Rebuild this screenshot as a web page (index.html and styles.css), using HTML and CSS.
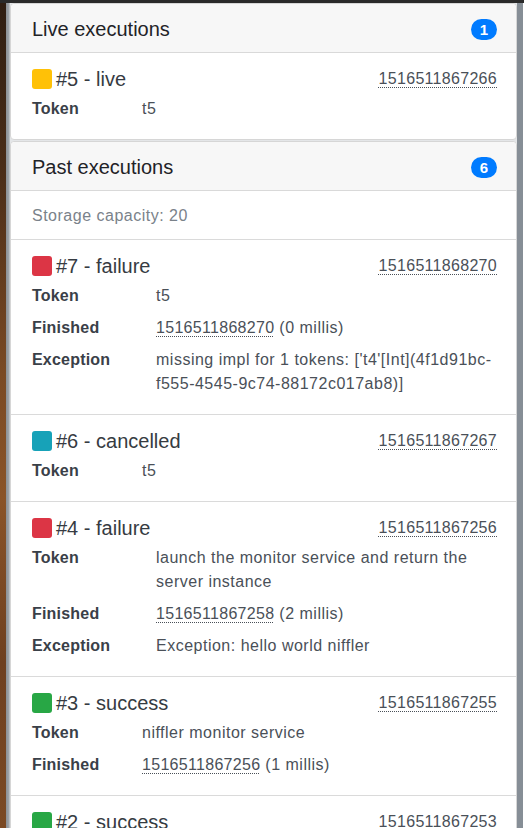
FILE: index.html
```html
<!DOCTYPE html>
<html lang="en">
<head>
<meta charset="utf-8">
<title>Executions</title>
<link rel="stylesheet" href="styles.css">
</head>
<body>
<div class="screen">
  <div class="topbar"></div>
  <div class="frame">
    <div class="wood"></div>
    <div class="edge-left"></div>
    <main class="panel">
      <section class="card">
        <header class="card-header">
          <h5 class="card-title">Live executions</h5>
          <span class="badge">1</span>
        </header>
        <ul class="list">
          <li class="item">
            <div class="item-head">
              <h5 class="item-title"><span class="status live"></span>#5 - live</h5>
              <abbr class="ts">1516511867266</abbr>
            </div>
            <dl class="props narrow">
              <dt>Token</dt><dd>t5</dd>
            </dl>
          </li>
        </ul>
      </section>

      <section class="card">
        <header class="card-header">
          <h5 class="card-title">Past executions</h5>
          <span class="badge">6</span>
        </header>
        <ul class="list">
          <li class="item muted-item">Storage capacity: 20</li>
          <li class="item">
            <div class="item-head">
              <h5 class="item-title"><span class="status failure"></span>#7 - failure</h5>
              <abbr class="ts">1516511868270</abbr>
            </div>
            <dl class="props wide">
              <dt>Token</dt><dd>t5</dd>
              <dt>Finished</dt><dd><abbr class="ts">1516511868270</abbr> (0 millis)</dd>
              <dt>Exception</dt><dd>missing impl for 1 tokens: ['t4'[Int](4f1d91bc-f555-4545-9c74-88172c017ab8)]</dd>
            </dl>
          </li>
          <li class="item">
            <div class="item-head">
              <h5 class="item-title"><span class="status cancelled"></span>#6 - cancelled</h5>
              <abbr class="ts">1516511867267</abbr>
            </div>
            <dl class="props narrow">
              <dt>Token</dt><dd>t5</dd>
            </dl>
          </li>
          <li class="item">
            <div class="item-head">
              <h5 class="item-title"><span class="status failure"></span>#4 - failure</h5>
              <abbr class="ts">1516511867256</abbr>
            </div>
            <dl class="props wide">
              <dt>Token</dt><dd>launch the monitor service and return the server instance</dd>
              <dt>Finished</dt><dd><abbr class="ts">1516511867258</abbr> (2 millis)</dd>
              <dt>Exception</dt><dd>Exception: hello world niffler</dd>
            </dl>
          </li>
          <li class="item">
            <div class="item-head">
              <h5 class="item-title"><span class="status success"></span>#3 - success</h5>
              <abbr class="ts">1516511867255</abbr>
            </div>
            <dl class="props narrow">
              <dt>Token</dt><dd>niffler monitor service</dd>
              <dt>Finished</dt><dd><abbr class="ts">1516511867256</abbr> (1 millis)</dd>
            </dl>
          </li>
          <li class="item">
            <div class="item-head">
              <h5 class="item-title"><span class="status success"></span>#2 - success</h5>
              <abbr class="ts">1516511867253</abbr>
            </div>
            <dl class="props narrow">
              <dt>Token</dt><dd>niffler monitor service</dd>
            </dl>
          </li>
        </ul>
      </section>
    </main>
    <div class="edge-right"></div>
  </div>
</div>
</body>
</html>
```

FILE: styles.css
```css
* { box-sizing: border-box; }

html, body {
  margin: 0;
  padding: 0;
  height: 100%;
  overflow: hidden;
  background: #ffffff;
  font-family: "Liberation Sans", Arial, sans-serif;
  font-size: 16px;
  color: #343a40;
}

.screen {
  display: flex;
  flex-direction: column;
  height: 828px;
}

.topbar {
  height: 3px;
  background: #2a2a2a;
  flex: none;
}

.frame {
  display: flex;
  flex: 1;
  min-height: 0;
}

.wood {
  width: 6px;
  flex: none;
  background: linear-gradient(180deg, #2f1e12 0%, #4a2d18 20%, #7a4a24 45%, #8a5428 60%, #6e4020 80%, #7b4a24 100%);
}

.edge-left {
  width: 4px;
  flex: none;
  background: linear-gradient(90deg, #8c9196 0%, #9aa0a5 60%, #c9ccce 100%);
}

.panel {
  width: 507px;
  flex: none;
  background: #e4e6e8;
  display: flex;
  flex-direction: column;
  gap: 1px;
  overflow: hidden;
}

.edge-right {
  width: 6px;
  flex: none;
  background: #868e96;
}

.card {
  background: #ffffff;
  border: 1px solid #d6d6d6;
  border-radius: 4px;
  flex: none;
}

.card-header {
  display: flex;
  align-items: center;
  justify-content: space-between;
  padding: 13px 19px 11px 21px;
  background: #f7f7f7;
  border-bottom: 1px solid #d9d9d9;
  border-radius: 4px 4px 0 0;
}

.card-title {
  margin: 0;
  font-size: 20px;
  line-height: 24px;
  font-weight: 400;
  color: #1f2327;
}

.badge {
  display: inline-block;
  min-width: 26px;
  padding: 3px 8px;
  border-radius: 12px;
  background: #007bff;
  color: #ffffff;
  font-size: 15px;
  line-height: 15px;
  font-weight: 700;
  text-align: center;
}

.list {
  list-style: none;
  margin: 0;
  padding: 0;
}

.item {
  padding: 13px 19px 14px 21px;
  border-bottom: 1px solid #dadada;
}

.item:last-child {
  border-bottom: none;
}

.muted-item {
  padding: 13px 21px 11px;
  line-height: 24px;
  color: #7a828a;
  letter-spacing: 0.5px;
}

.item-head {
  display: flex;
  align-items: center;
  justify-content: space-between;
  height: 25px;
}

.item-title {
  margin: 0;
  display: flex;
  align-items: center;
  gap: 4px;
  font-size: 20px;
  line-height: 24px;
  font-weight: 400;
  color: #363b42;
}

.status {
  display: inline-block;
  width: 20px;
  height: 20px;
  border-radius: 3px;
}

.status.live { background: #ffc107; }
.status.failure { background: #dc3545; }
.status.cancelled { background: #17a2b8; }
.status.success { background: #28a745; }

.ts {
  color: #4a5058;
  text-decoration: underline dotted;
  text-decoration-thickness: 1px;
  text-underline-offset: 3px;
  line-height: 24px;
  letter-spacing: 0.3px;
}

.props {
  display: grid;
  margin: 2px 0 0;
  line-height: 24px;
}

.props.narrow { grid-template-columns: 110px 1fr; }
.props.wide { grid-template-columns: 124px 1fr; }

.props dt {
  padding: 4px 0;
  font-weight: 700;
  color: #3a4048;
  letter-spacing: 0.2px;
}

.props dd {
  margin: 0;
  padding: 4px 0;
  color: #4a5058;
  letter-spacing: 0.5px;
}
```
